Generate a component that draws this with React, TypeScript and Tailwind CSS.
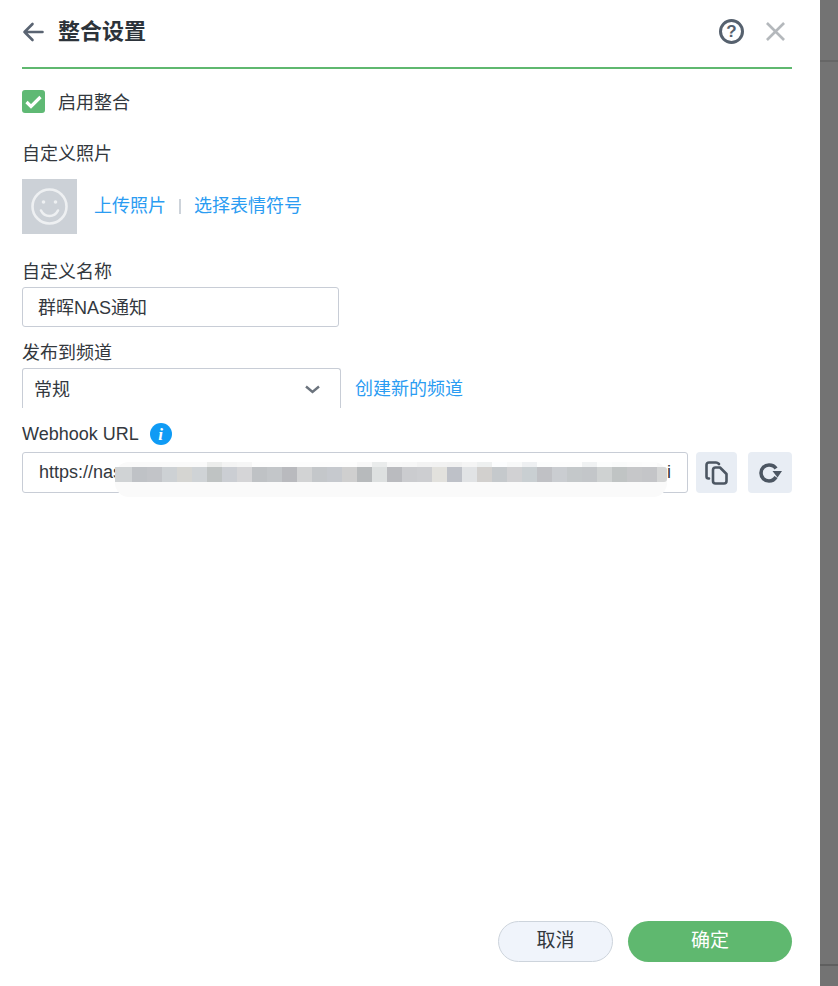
import * as React from "react"

const FONT = { fontFamily: '"Liberation Sans", "Noto Sans CJK SC", sans-serif' }

// mosaic over the webhook token, 15px cells starting at x=132
const MOSAIC = [
  "#bfc2c6", "#c2c4c8", "#cdd1d4", "#d5d5d2", "#cfd3d6", "#bfc3c3", "#cbced3", "#d5d5d7", "#bfc2c5", "#c3c6c9",
  "#b9babe", "#d2d3d4", "#c4c7ca", "#c6c9ce", "#cfcfcf", "#b7babc", "#dde0e0", "#babbbf", "#cbcccf", "#cdced1",
  "#e2e1dd", "#bec1c8", "#e1e3e5", "#d2d0ce", "#c5c9cc", "#d1d1d3", "#c9cfd2", "#c0c1c5", "#cacdd1", "#c4c8ca",
  "#c3c6c9", "#cfd2d2", "#c0c4c4", "#c6c7c9", "#c4c5c8",
]
const MOSAIC_TOP = [
  "#fafafa", "#fafafa", "#fafafa", "#fafafa", "#fafafa", "#ecedec", "#f4f4f4", "#f6f6f6", "#fdfdfd", "#fdfdfd",
  "#fdfdfd", "#fdfdfd", "#fdfdfd", "#fdfdfd", "#fdfdfd", "#f8f8f8", "#eaecec", "#f8f8f8", "#f7f7f7", "#f3f3f3",
  "#f2f2f2", "#f1f1f1", "#f5f5f5", "#eef0f0", "#fcfdfe", "#f8f9f9", "#eef0f2", "#fcfdfd", "#fdfdfd", "#fdfdfd",
  "#f0f2f3", "#fcfdfd", "#fafbfb", "#fcfcfc", "#fdfdfd",
]

function WebhookField() {
  return (
    <div className="relative flex h-[41px] w-[666px] items-center justify-between rounded-[3px] border border-[#c8cdd6] pb-[2px] pl-[16px] pr-[16px] text-[18px] text-[#33383e]">
      <span>https://nas</span>
      <span>i</span>
      <div className="absolute left-[92px] top-[9px] h-[35px] w-[552px] rounded-[14px] bg-[#fafafa]">
        <div className="flex h-[5px] pl-[17px]">
          {MOSAIC_TOP.map((c, i) => (
            <div key={i} className="h-full w-[15px]" style={{ backgroundColor: c }} />
          ))}
        </div>
        <div className="flex h-[15px]">
          <div className="h-full w-[17px] bg-[#d0d3d5]" />
          {MOSAIC.map((c, i) => (
            <div key={i} className="h-full w-[15px]" style={{ backgroundColor: c }} />
          ))}
          <div className="h-full w-[10px] rounded-r-[3px] bg-[#d5d6d6]" />
        </div>
      </div>
    </div>
  )
}

export default function App() {
  return (
    <div className="flex h-[986px] w-[838px] overflow-hidden bg-white text-[18px] leading-[24px] text-[#33383e]" style={FONT}>
      <div className="flex w-[820px] flex-col pl-[22px] pr-[28px]">
        <header className="flex h-[69px] shrink-0 items-center border-b-2 border-[#5fb86f] pb-[4px]">
          <svg width="22" height="20" viewBox="0 0 22 20" fill="none" stroke="#5a6472" strokeWidth="2.6" strokeLinecap="round" strokeLinejoin="round" className="mr-[14px]">
            <path d="M20.5 10H2.5M10.5 2L2.5 10L10.5 18" />
          </svg>
          <h1 className="text-[22px] font-bold leading-[30px] text-[#2c333a]">整合设置</h1>
          <div className="ml-auto flex items-center gap-[22px]">
            <div className="flex h-[25px] w-[25px] items-center justify-center rounded-full border-[3px] border-[#56616e] text-[17px] font-semibold leading-none text-[#56616e]">?</div>
            <svg width="19" height="19" viewBox="0 0 20 20" fill="none" stroke="#b4b8bc" strokeWidth="2.8" className="mr-[7px]">
              <path d="M1 1L19 19M19 1L1 19" />
            </svg>
          </div>
        </header>

        <div className="mt-[21px] flex h-[25px] items-start">
          <div className="flex h-[23px] w-[23px] items-center justify-center rounded-[3px] bg-[#5fb974]">
            <svg width="17" height="14" viewBox="0 0 17 14" fill="none" stroke="#fff" strokeWidth="3.2">
              <path d="M1.5 7L6 11.5L15.5 2" />
            </svg>
          </div>
          <span className="ml-[13px] mt-[1px]">启用整合</span>
        </div>

        <div className="mt-[27px]">自定义照片</div>
        <div className="mt-[13px] flex h-[55px] items-center">
          <div className="flex h-[55px] w-[55px] items-center justify-center bg-[#ccd1d7]">
            <svg width="37" height="37" viewBox="0 0 37 37" fill="none" stroke="#eef0f2" strokeWidth="2.6" strokeLinecap="round">
              <circle cx="18.5" cy="18.5" r="17" />
              <path d="M10 22.5C12 26.5 15 28 18.5 28C22 28 25 26.5 27 22.5" />
              <circle cx="12.5" cy="14" r="1.8" fill="#eef0f2" stroke="none" />
              <circle cx="24.5" cy="14" r="1.8" fill="#eef0f2" stroke="none" />
            </svg>
          </div>
          <a className="mb-[2px] ml-[17px] text-[#2b9cf2]">上传照片</a>
          <span className="mx-[13px] h-[15px] w-[2px] bg-[#cdd3da]" />
          <a className="mb-[2px] text-[#2b9cf2]">选择表情符号</a>
        </div>

        <div className="mt-[26px]">自定义名称</div>
        <div className="mt-[3px] flex h-[40px] w-[317px] items-center rounded-[3px] border border-[#c8cdd6] pl-[15px] pt-[2px]">群晖NAS通知</div>

        <div className="mt-[14px]">发布到频道</div>
        <div className="mt-[3px] flex items-start">
          <div className="flex h-[40px] w-[319px] items-center justify-between rounded-t-[3px] border border-b-0 border-[#c8cdd6] pl-[11px] pr-[20px] pt-[2px]">
            <span>常规</span>
            <svg width="15" height="9" viewBox="0 0 15 9" fill="none" stroke="#6b737d" strokeWidth="2.4">
              <path d="M1 1.5L7.5 7L14 1.5" />
            </svg>
          </div>
          <a className="ml-[14px] mt-[9px] text-[#2b9cf2]">创建新的频道</a>
        </div>

        <div className="mt-[14px] flex h-[24px] items-center">
          <span>Webhook URL</span>
          <div className="ml-[11px] flex h-[22px] w-[22px] items-center justify-center rounded-full bg-[#0f9bf5] text-[17px] font-bold italic leading-none text-white" style={{ fontFamily: '"Liberation Serif", serif' }}>i</div>
        </div>
        <div className="mt-[6px] flex items-start">
          <WebhookField />
          <button className="ml-[8px] flex h-[41px] w-[41px] items-center justify-center rounded-[4px] bg-[#e8edf4]">
            <svg width="23" height="24" viewBox="0 0 23 24" fill="none" stroke="#4c5662" strokeWidth="2.6" strokeLinejoin="round" strokeLinecap="round">
              <path d="M4 17.5H3.5C2 17.5 1.5 16.5 1.5 15.5V4C1.5 2.5 2.5 1.5 4 1.5H11C12.5 1.5 13 2 14 3" />
              <path d="M8 9C8 7.5 9 6.5 10.5 6.5H15L21.5 13V20C21.5 21.5 20.5 22.5 19 22.5H10.5C9 22.5 8 21.5 8 20Z" />
            </svg>
          </button>
          <button className="ml-[11px] flex h-[41px] w-[44px] items-center justify-center rounded-[4px] bg-[#e8edf4]">
            <svg width="24" height="22" viewBox="0 0 24 22" fill="none" stroke="#4c5662" strokeWidth="3.6">
              <path d="M18 6.5C16.5 4 14 3 11 3C6.6 3 3 6.6 3 11C3 15.4 6.6 19 11 19C14 19 16.5 17.5 18 15" />
              <path d="M14.5 9L24 9L19.5 15.5Z" fill="#4c5662" stroke="none" />
            </svg>
          </button>
        </div>

        <footer className="mb-[24px] mt-auto flex justify-end gap-[15px]">
          <button className="h-[41px] w-[115px] rounded-full border border-[#cdd4dc] bg-[#f0f4fb] pb-[2px] text-[19px] text-[#33383e]">取消</button>
          <button className="h-[41px] w-[164px] rounded-full bg-[#5fb86f] pb-[2px] text-[19px] text-white">确定</button>
        </footer>
      </div>

      <div className="w-[18px] shrink-0 bg-[#737373]">
        <div className="mt-[60px] h-[2px] bg-[#666666]" />
        <div className="mt-[902px] h-[2px] bg-[#5f5f5f]" />
      </div>
    </div>
  )
}
